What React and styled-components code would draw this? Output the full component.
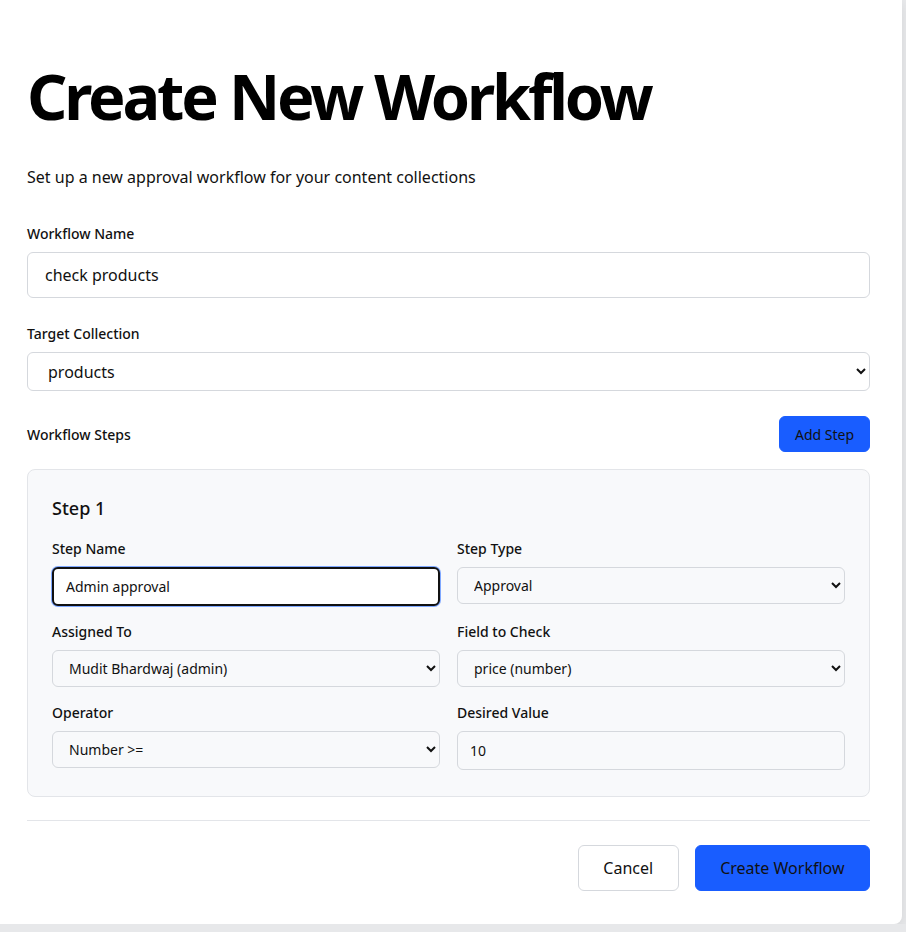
import React from "react";
import styled, { createGlobalStyle } from "styled-components";

const GlobalStyle = createGlobalStyle`
    html, body {
        margin: 0;
        padding: 0;
        background: #e7e8ea;
        font-family: "Noto Sans", "Open Sans", sans-serif;
        color: #111;
    }
    * {
        box-sizing: border-box;
    }
`;

const Card = styled.div`
    width: 907px;
    margin-left: -5px;
    background: #fff;
    border-radius: 0 0 8px 0;
    box-shadow: 0 4px 12px rgba(0, 0, 0, 0.08);
    padding: 58px 32px 33px 32px;
`;

const Title = styled.h1`
    margin: 0;
    font-size: 63px;
    line-height: 76px;
    font-weight: 700;
    letter-spacing: -0.05em;
    color: #000;
`;

const Subtitle = styled.p`
    margin: 31px 0 0 0;
    font-size: 16px;
    line-height: 24px;
    color: #111;
`;

const Group = styled.div`
    display: flex;
    flex-direction: column;
    margin-top: ${({ top }) => top || 0}px;
`;

const Label = styled.label`
    font-size: 14px;
    line-height: 20px;
    font-weight: 500;
    color: #111;
    margin-bottom: 8px;
`;

const TextInput = styled.input`
    font-family: inherit;
    font-size: 16px;
    height: 46px;
    padding: 0 17px;
    border: 1px solid #d5d8dd;
    border-radius: 6px;
    background: #fff;
    color: #111;
    outline: none;
`;

const Select = styled.select`
    font-family: inherit;
    font-size: 16px;
    height: 39px;
    padding: 0 16px;
    border: 1px solid #d5d8dd;
    border-radius: 6px;
    background: #fff;
    color: #111;
    outline: none;
`;

const StepsHeader = styled.div`
    display: flex;
    align-items: center;
    justify-content: space-between;
    margin-top: 25px;
`;

const HeaderLabel = styled.span`
    font-size: 14px;
    font-weight: 500;
    color: #111;
`;

const Button = styled.button`
    font-family: inherit;
    font-size: ${({ big }) => (big ? 16 : 14)}px;
    height: ${({ big }) => (big ? 46 : 36)}px;
    padding: 0 ${({ big }) => (big ? 24.5 : 15)}px;
    border-radius: 6px;
    border: 1px solid ${({ primary }) => (primary ? "#195dff" : "#d5d8dd")};
    background: ${({ primary }) => (primary ? "#195dff" : "#fff")};
    color: #111;
    cursor: pointer;
`;

const StepCard = styled.div`
    margin-top: 17px;
    background: #f8f9fb;
    border: 1px solid #e3e5e9;
    border-radius: 8px;
    padding: 24px 24px 26px 24px;
`;

const StepTitle = styled.h3`
    margin: 0 0 17px 0;
    font-size: 18px;
    line-height: 28px;
    font-weight: 500;
`;

const StepGrid = styled.div`
    display: grid;
    grid-template-columns: 1fr 1fr;
    column-gap: 17px;
    row-gap: 16px;
`;

const Field = styled.div`
    display: flex;
    flex-direction: column;
`;

const StepInput = styled.input`
    font-family: inherit;
    font-size: 14px;
    height: 39px;
    padding: 0 12px;
    border: ${({ focused }) => (focused ? "2px solid #111" : "1px solid #d5d8dd")};
    border-radius: 6px;
    background: ${({ focused }) => (focused ? "#fff" : "transparent")};
    box-shadow: ${({ focused }) => (focused ? "0 0 0 1px #7fa8ff" : "none")};
    color: #111;
    outline: none;
`;

const StepSelect = styled.select`
    font-family: inherit;
    font-size: 14px;
    height: 37px;
    padding: 0 12px;
    border: 1px solid #d5d8dd;
    border-radius: 6px;
    background: transparent;
    color: #111;
    outline: none;
`;

const Divider = styled.hr`
    border: none;
    border-top: 1px solid #e3e5e9;
    margin: 23px 0 0 0;
`;

const Footer = styled.div`
    display: flex;
    justify-content: flex-end;
    gap: 16px;
    margin-top: 24px;
`;

export default function App() {
    return (
        <>
            <GlobalStyle />
            <Card>
                <Title>Create New Workflow</Title>
                <Subtitle>Set up a new approval workflow for your content collections</Subtitle>

                <Group top={35}>
                    <Label>Workflow Name</Label>
                    <TextInput defaultValue="check products" />
                </Group>

                <Group top={26}>
                    <Label>Target Collection</Label>
                    <Select defaultValue="products">
                        <option value="products">products</option>
                    </Select>
                </Group>

                <StepsHeader>
                    <HeaderLabel>Workflow Steps</HeaderLabel>
                    <Button primary>Add Step</Button>
                </StepsHeader>

                <StepCard>
                    <StepTitle>Step 1</StepTitle>
                    <StepGrid>
                        <Field>
                            <Label>Step Name</Label>
                            <StepInput focused defaultValue="Admin approval" />
                        </Field>
                        <Field>
                            <Label>Step Type</Label>
                            <StepSelect defaultValue="approval">
                                <option value="approval">Approval</option>
                            </StepSelect>
                        </Field>
                        <Field>
                            <Label>Assigned To</Label>
                            <StepSelect defaultValue="mudit">
                                <option value="mudit">Mudit Bhardwaj (admin)</option>
                            </StepSelect>
                        </Field>
                        <Field>
                            <Label>Field to Check</Label>
                            <StepSelect defaultValue="price">
                                <option value="price">price (number)</option>
                            </StepSelect>
                        </Field>
                        <Field>
                            <Label>Operator</Label>
                            <StepSelect defaultValue="gte">
                                <option value="gte">Number &gt;=</option>
                            </StepSelect>
                        </Field>
                        <Field>
                            <Label>Desired Value</Label>
                            <StepInput defaultValue="10" />
                        </Field>
                    </StepGrid>
                </StepCard>

                <Divider />

                <Footer>
                    <Button big>Cancel</Button>
                    <Button big primary>Create Workflow</Button>
                </Footer>
            </Card>
        </>
    );
}
